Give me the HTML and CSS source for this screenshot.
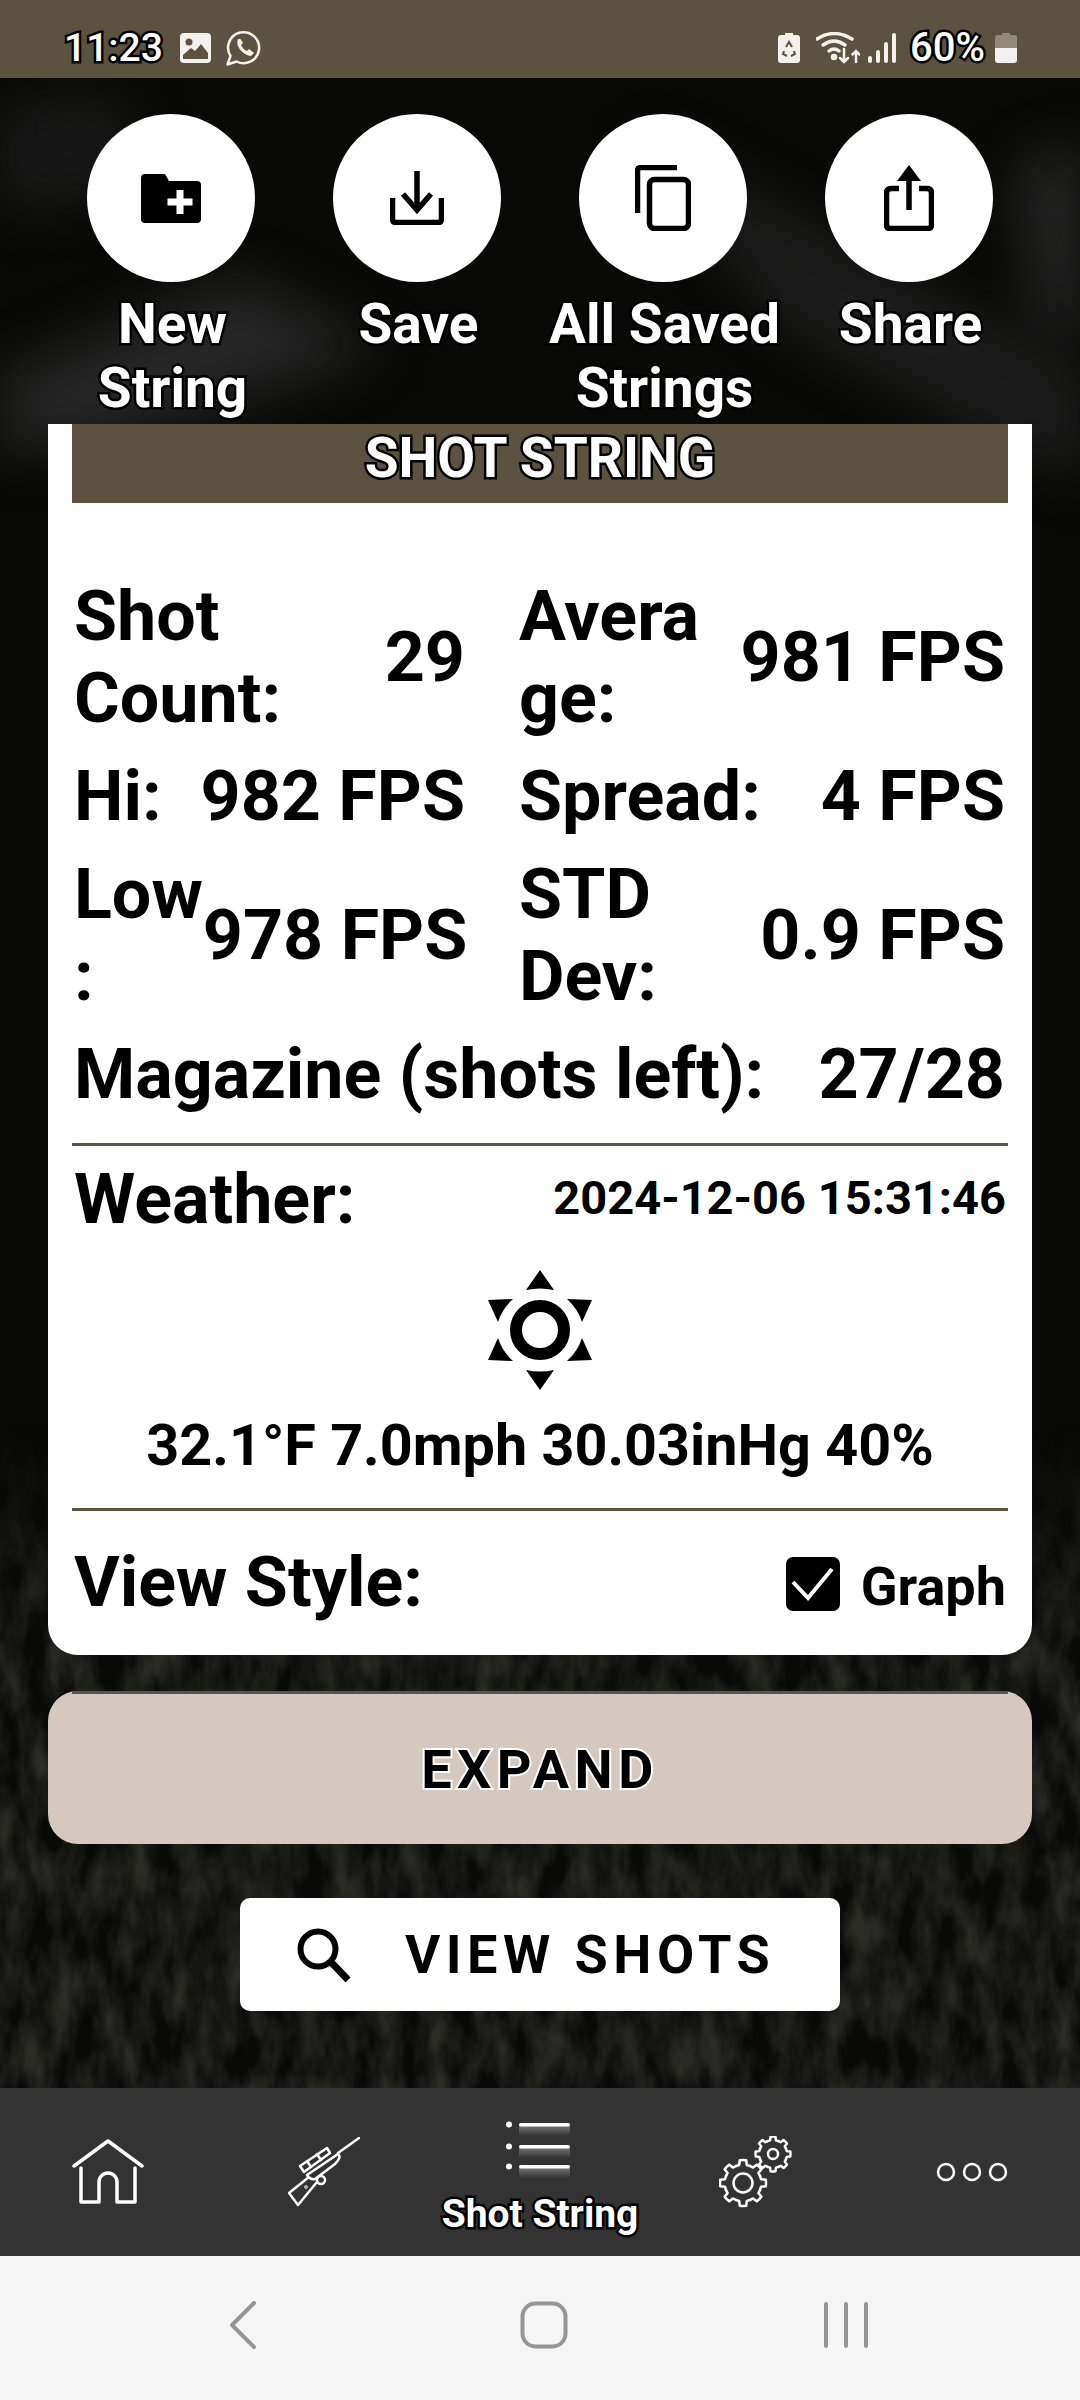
FILE: index.html
```html
<!DOCTYPE html>
<html lang="en">
<head>
    <meta charset="UTF-8">
    <meta name="viewport" content="width=device-width, initial-scale=1.0">
    <title>Shot String</title>
    <link rel="stylesheet" href="styles.css">
</head>
<body>
    <div class="screen">
        <svg class="backdrop" viewBox="0 0 1080 2010" preserveAspectRatio="none" aria-hidden="true">
            <defs>
                <filter id="grass" x="0" y="0" width="100%" height="100%" color-interpolation-filters="sRGB">
                    <feTurbulence type="fractalNoise" baseFrequency="0.04 0.018" numOctaves="4" seed="7"/>
                    <feColorMatrix values="0 0 0 0 0.17  0 0 0 0 0.17  0 0 0 0 0.15  2 0 0 0 -0.6"/>
                </filter>
                <filter id="soft" x="-50%" y="-50%" width="200%" height="200%" color-interpolation-filters="sRGB">
                    <feGaussianBlur stdDeviation="26"/>
                </filter>
                <linearGradient id="fade" x1="0" y1="0" x2="0" y2="1">
                    <stop offset="0" stop-color="#000"/>
                    <stop offset="0.35" stop-color="#fff"/>
                </linearGradient>
                <mask id="lower"><rect x="0" y="1350" width="1080" height="660" fill="url(#fade)"/></mask>
            </defs>
            <rect width="1080" height="2010" fill="#090908"/>
            <g filter="url(#soft)">
                <path d="M0 300 L240 200 L380 270 L120 360 L0 370Z" fill="#262626"/>
                <path d="M640 60 L1080 300 L1080 400 L780 240Z" fill="#1e1e1e"/>
                <path d="M0 30 L120 20 L140 110 L0 130Z" fill="#181818"/>
                <path d="M1020 90 L1080 70 L1080 260 L1040 240Z" fill="#2a2a2a"/>
            </g>
            <rect width="1080" height="2010" filter="url(#grass)" mask="url(#lower)"/>
        </svg>

        <div class="status-bar">
            <div class="status-left">
                <span class="status-text">11:23</span>
                <svg class="status-pic" width="31" height="30" viewBox="0 0 31 30">
                    <rect width="31" height="30" rx="4" fill="#f2f1ee"/>
                    <circle cx="9" cy="9" r="3.500" fill="#5c5240"/>
                    <path d="M3 26 V22 L11 15 L15 18 L21 11 L28 20 V26Z" fill="#5c5240"/>
                </svg>
                <svg class="status-icon" width="36" height="36" viewBox="0 0 36 36" fill="none">
                    <path d="M1.500 34.500 L4.500 26 A15.500 15.500 0 1 1 10.500 31.500Z" stroke="#f2f1ee" stroke-width="2.500" stroke-linejoin="round"/>
                    <path d="M12 9 C9 15 16 25 25 26 L28 23 L23 19 L21 21 C18 20 16 17 15 15 L17 13 L14.500 9Z" fill="#f2f1ee"/>
                </svg>
            </div>
            <div class="status-right">
                <svg class="status-icon" width="22" height="32" viewBox="0 0 22 32">
                    <path d="M7 1 H15 V3 H19 Q22 3 22 6 V28 Q22 31 19 31 H3 Q0 31 0 28 V6 Q0 3 3 3 H7Z" fill="#f2f1ee"/>
                    <path d="M8 15 L11 10 L14 15 M6 19 L5 22 L9 24 M16 19 L17 22 L13 24" stroke="#5c5240" stroke-width="2" fill="none"/>
                </svg>
                <svg class="status-wifi" width="44" height="32" viewBox="0 0 44 32" fill="none" stroke="#f2f1ee" stroke-width="3.500" stroke-linecap="round">
                    <path d="M1 7 Q18 -4 36 7"/>
                    <path d="M7 13 Q18 5 29 13"/>
                    <path d="M13 19 Q18 15 23 19"/>
                    <circle cx="18" cy="25" r="1.500" fill="#f2f1ee"/>
                    <path d="M28 17 V30 M24 26 L28 30 L32 26 M40 30 V19 M36.500 22.500 L40 19 L43.500 22.500" stroke-width="2.500"/>
                </svg>
                <svg class="status-signal" width="28" height="30" viewBox="0 0 28 30" fill="#f2f1ee">
                    <rect x="0" y="23" width="4" height="7" rx="2"/>
                    <rect x="8" y="17" width="4" height="13" rx="2"/>
                    <rect x="16" y="9" width="4" height="21" rx="2"/>
                    <rect x="24" y="0" width="4" height="30" rx="2"/>
                </svg>
                <span class="status-text status-pct">60%</span>
                <svg class="status-icon" width="22" height="32" viewBox="0 0 22 32">
                    <path d="M7 1 H15 V3 H19 Q22 3 22 6 V16 H0 V6 Q0 3 3 3 H7Z" fill="#918a7c"/>
                    <path d="M0 16 H22 V28 Q22 31 19 31 H3 Q0 31 0 28Z" fill="#f2f1ee"/>
                </svg>
            </div>
        </div>

        <div class="actions">
            <div class="action">
                <div class="action-circle">
                    <svg width="60" height="49" viewBox="0 0 60 49">
                        <path d="M4 0 H24 L28 7 H56 Q60 7 60 11 V45 Q60 49 56 49 H4 Q0 49 0 45 V4 Q0 0 4 0Z" fill="#000"/>
                        <path d="M35.500 16 H42.500 V24.500 H51.500 V31.500 H42.500 V40 H35.500 V31.500 H26.500 V24.500 H35.500Z" fill="#fff"/>
                    </svg>
                </div>
                <span class="action-label">New<br>String</span>
            </div>
            <div class="action">
                <div class="action-circle">
                    <svg width="54" height="54" viewBox="0 0 54 54" fill="none" stroke="#000" stroke-width="5.500">
                        <path d="M27 0 V38 M13 23 L27 39 L41 23"/>
                        <path d="M2.500 27 V48 Q2.500 51.500 6 51.500 H48 Q51.500 51.500 51.500 48 V27"/>
                    </svg>
                </div>
                <span class="action-label">Save</span>
            </div>
            <div class="action">
                <div class="action-circle">
                    <svg width="56" height="66" viewBox="0 0 56 66" fill="none" stroke="#000" stroke-width="5.500">
                        <path d="M2.500 48 V6 Q2.500 2.500 6 2.500 H42"/>
                        <rect x="14.500" y="14.500" width="39" height="49" rx="5"/>
                    </svg>
                </div>
                <span class="action-label">All Saved<br>Strings</span>
            </div>
            <div class="action">
                <div class="action-circle">
                    <svg width="50" height="66" viewBox="0 0 50 66" fill="none" stroke="#000" stroke-width="5.500">
                        <path d="M25 8 V45"/>
                        <path d="M25 0 L37 16 L31 16 H19 L13 16Z" fill="#000" stroke="none"/>
                        <path d="M15 23.500 H7 Q2.500 23.500 2.500 28 V60 Q2.500 63.500 6 63.500 H44 Q47.500 63.500 47.500 60 V28 Q47.500 23.500 43 23.500 H35"/>
                    </svg>
                </div>
                <span class="action-label">Share</span>
            </div>
        </div>

        <div class="card">
            <div class="card-title">SHOT STRING</div>

            <div class="stats">
                <div class="stat"><span>Shot<br>Count:</span><span>29</span></div>
                <div class="stat"><span>Avera<br>ge:</span><span>981 FPS</span></div>
                <div class="stat"><span>Hi:</span><span>982 FPS</span></div>
                <div class="stat"><span>Spread:</span><span>4 FPS</span></div>
                <div class="stat"><span>Low<br>:</span><span>978 FPS</span></div>
                <div class="stat"><span>STD<br>Dev:</span><span>0.9 FPS</span></div>
                <div class="stat stat-wide"><span>Magazine (shots left):</span><span>27/28</span></div>
            </div>

            <div class="weather">
                <div class="weather-head">
                    <span>Weather:</span>
                    <span class="weather-date">2024-12-06 15:31:46</span>
                </div>
                <svg class="sun" width="104" height="120" viewBox="0 0 104 120" fill="#000">
                    <path d="M52 0 L66 20 Q52 17 38 20Z"/>
                    <path d="M52 120 L66 100 Q52 103 38 100Z"/>
                    <path d="M0 30 L25 29 Q14 39 10 52Z"/>
                    <path d="M104 30 L79 29 Q90 39 94 52Z"/>
                    <path d="M0 90 L25 91 Q14 81 10 68Z"/>
                    <path d="M104 90 L79 91 Q90 81 94 68Z"/>
                    <circle cx="52" cy="60" r="24" fill="none" stroke="#000" stroke-width="12"/>
                </svg>
                <div class="weather-values">32.1°F 7.0mph 30.03inHg 40%</div>
            </div>

            <div class="view-style">
                <span>View Style:</span>
                <div class="graph-toggle">
                    <div class="checkbox">
                        <svg width="54" height="54" viewBox="0 0 54 54" fill="none">
                            <path d="M7 25 L22 41 L46 12" stroke="#fff" stroke-width="4"/>
                        </svg>
                    </div>
                    <span class="graph-label">Graph</span>
                </div>
            </div>
        </div>

        <div class="btn-expand"><span class="btn-expand-text">EXPAND</span></div>

        <div class="btn-view">
            <svg width="54" height="54" viewBox="0 0 54 54" fill="none" stroke="#000" stroke-width="6">
                <circle cx="21" cy="21" r="17.500"/>
                <path d="M33 33 L51 52" stroke-width="7"/>
            </svg>
            <span>VIEW SHOTS</span>
        </div>

        <div class="spacer"></div>

        <div class="tab-bar">
            <div class="tab">
                <svg width="72" height="66" viewBox="0 0 72 66" fill="none" stroke="#fff" stroke-width="3.500" stroke-linecap="round" stroke-linejoin="round">
                    <path d="M2 27 L36 2 L70 27"/>
                    <path d="M9 29 V63 H27 V43 A9 9 0 0 1 45 43 V63 H63 V29"/>
                </svg>
            </div>
            <div class="tab">
                <svg width="72" height="70" viewBox="0 0 72 70" fill="none" stroke="#fff" stroke-width="2.500" stroke-linejoin="round" stroke-linecap="round">
                    <path d="M71 1 L50 16"/>
                    <path d="M19 38 L50 17 Q54 20 47 27 L27 42 Q22 43 19 38Z"/>
                    <path d="M12 29 L39 11 L42 16 L16 35Z"/>
                    <path d="M19 24 L23 30 M29 17 L33 23"/>
                    <path d="M21 40 L1 56 L10 68 L29 45"/>
                    <circle cx="33" cy="43" r="4"/>
                    <circle cx="18" cy="50" r="0.500"/>
                </svg>
            </div>
            <div class="tab tab-active">
                <svg class="list-icon" width="66" height="60" viewBox="0 0 66 60">
                    <defs>
                        <linearGradient id="glow" x1="0" y1="0" x2="0" y2="1">
                            <stop offset="0" stop-color="#fff" stop-opacity="0.32"/>
                            <stop offset="1" stop-color="#fff" stop-opacity="0"/>
                        </linearGradient>
                    </defs>
                    <g fill="url(#glow)">
                        <rect x="14" y="5" width="51" height="10"/>
                        <rect x="14" y="27" width="51" height="10"/>
                        <rect x="14" y="47" width="51" height="10"/>
                    </g>
                    <g fill="#fff">
                        <circle cx="4" cy="3.500" r="3"/>
                        <circle cx="4" cy="25.500" r="3"/>
                        <circle cx="4" cy="45.500" r="3"/>
                        <rect x="14" y="2" width="51" height="3.500" rx="1.700"/>
                        <rect x="14" y="24" width="51" height="3.500" rx="1.700"/>
                        <rect x="14" y="44" width="51" height="3.500" rx="1.700"/>
                    </g>
                </svg>
                <span class="tab-label">Shot String</span>
            </div>
            <div class="tab">
                <svg width="74" height="72" viewBox="0 0 74 72" fill="none" stroke="#fff" stroke-linejoin="round" stroke-linecap="round">
                    <defs>
                        <path id="gear-tooth" d="M-3.060 -7.390 L-1.660 -7.820 L-1.390 -9.900 Q0 -10.100 1.390 -9.900 L1.660 -7.820 L3.060 -7.390"/>
                        <g id="gear">
                            <use href="#gear-tooth"/>
                            <use href="#gear-tooth" transform="rotate(45)"/>
                            <use href="#gear-tooth" transform="rotate(90)"/>
                            <use href="#gear-tooth" transform="rotate(135)"/>
                            <use href="#gear-tooth" transform="rotate(180)"/>
                            <use href="#gear-tooth" transform="rotate(225)"/>
                            <use href="#gear-tooth" transform="rotate(270)"/>
                            <use href="#gear-tooth" transform="rotate(315)"/>
                        </g>
                    </defs>
                    <use href="#gear" transform="translate(24 47) scale(2.300)" stroke-width="1.100"/>
                    <circle cx="24" cy="47" r="9.500" stroke-width="2.500"/>
                    <use href="#gear" transform="translate(54 18) scale(1.750)" stroke-width="1.400"/>
                    <circle cx="54" cy="18" r="5" stroke-width="2.500"/>
                </svg>
            </div>
            <div class="tab">
                <svg width="72" height="20" viewBox="0 0 72 20" fill="none" stroke="#fff" stroke-width="2.500">
                    <circle cx="10" cy="10" r="8"/>
                    <circle cx="36" cy="10" r="8"/>
                    <circle cx="62" cy="10" r="8"/>
                </svg>
            </div>
        </div>

        <div class="system-nav">
            <svg width="28" height="48" viewBox="0 0 28 48" fill="none" stroke="#959595" stroke-width="4" stroke-linecap="round" stroke-linejoin="round">
                <path d="M25 2 L3 24 L25 46"/>
            </svg>
            <svg width="48" height="48" viewBox="0 0 48 48" fill="none" stroke="#959595" stroke-width="4">
                <rect x="2.500" y="2.500" width="43" height="43" rx="13"/>
            </svg>
            <svg width="46" height="46" viewBox="0 0 46 46" fill="none" stroke="#959595" stroke-width="4" stroke-linecap="round">
                <path d="M3 2 V44 M23 2 V44 M43 2 V44"/>
            </svg>
        </div>
    </div>
</body>
</html>
```

FILE: styles.css
```css
* {
    box-sizing: border-box;
}
html, body {
    margin: 0;
    padding: 0;
}
body {
    font-family: Roboto, "Liberation Sans", sans-serif;
    background: #000;
    color: #000;
}
.screen {
    position: relative;
    width: 1080px;
    height: 2400px;
    display: flex;
    flex-direction: column;
    overflow: hidden;
}
.backdrop {
    position: absolute;
    left: 0;
    top: 78px;
    width: 1080px;
    height: 2010px;
}
.screen > div {
    position: relative;
}

/* text with a dark rim, like the app draws on its labels */
.status-text, .action-label, .card-title, .tab-label {
    color: #fff;
    -webkit-text-stroke: 5px #000;
    paint-order: stroke fill;
}

.status-bar {
    height: 78px;
    flex: none;
    background: #5c5240;
    display: flex;
    justify-content: space-between;
    align-items: center;
    padding: 18px 63px 0 64px;
}
.status-left, .status-right {
    display: flex;
    align-items: center;
}
.status-text {
    font-size: 39px;
    line-height: 44px;
    font-weight: 500;
}
.status-icon {
    display: block;
}
.status-pic {
    display: block;
    margin: 0 15px 0 17px;
}
.status-wifi {
    display: block;
    margin: 0 8px 0 16px;
}
.status-signal {
    display: block;
    margin-right: 14px;
}
.status-pct {
    font-size: 40px;
    margin-right: 10px;
}

.actions {
    height: 346px;
    flex: none;
    display: grid;
    grid-template-columns: repeat(4, 246px);
    justify-content: center;
    padding-top: 36px;
}
.action {
    display: flex;
    flex-direction: column;
    align-items: center;
}
.action-circle {
    width: 168px;
    height: 168px;
    flex: none;
    border-radius: 50%;
    background: #fff;
    display: flex;
    align-items: center;
    justify-content: center;
}
.action-label {
    margin-top: 10px;
    padding-left: 3px;
    font-size: 55px;
    line-height: 64px;
    font-weight: 700;
    text-align: center;
}

.card {
    margin: 0 48px;
    height: 1231px;
    flex: none;
    background: #fff;
    border-radius: 0 0 30px 30px;
    padding: 0 24px;
}
.card-title {
    height: 79px;
    background: #5c5240;
    font-size: 55px;
    line-height: 69px;
    font-weight: 700;
    text-align: center;
}
.stats {
    margin-top: 72px;
    display: grid;
    grid-template-columns: 391px 486px;
    column-gap: 54px;
    row-gap: 16px;
    font-size: 70px;
    line-height: 82px;
    font-weight: 700;
    padding-left: 2px;
}
.stat {
    display: flex;
    justify-content: space-between;
    align-items: center;
    white-space: nowrap;
}
.stat-wide {
    grid-column: 1 / -1;
}
.weather {
    margin-top: 28px;
    border-top: 3px solid #5c5240;
    border-bottom: 3px solid #5c5240;
    height: 368px;
    display: flex;
    flex-direction: column;
    align-items: center;
}
.weather-head {
    width: 100%;
    display: flex;
    justify-content: space-between;
    align-items: center;
    padding: 9px 2px 0;
    height: 96px;
    font-size: 70px;
    font-weight: 700;
}
.weather-date {
    font-size: 47px;
    margin-top: -2px;
}
.sun {
    display: block;
    margin-top: 28px;
    flex: none;
}
.weather-values {
    margin-top: 23px;
    font-size: 57.500px;
    line-height: 66px;
    font-weight: 700;
}
.view-style {
    display: flex;
    justify-content: space-between;
    align-items: center;
    height: 114px;
    padding: 0 2px;
    margin-top: 14px;
    font-size: 70px;
    font-weight: 700;
}
.graph-toggle {
    display: flex;
    align-items: center;
    gap: 21px;
    margin-top: 4px;
    font-size: 54px;
}
.graph-label {
    padding-top: 4px;
}
.checkbox {
    width: 54px;
    height: 54px;
    background: #000;
    border-radius: 7px;
}
.checkbox svg {
    display: block;
}

.btn-expand {
    margin: 36px 48px 0;
    height: 153px;
    flex: none;
    background: #d5c9bf;
    border-radius: 30px;
    display: flex;
    align-items: center;
    justify-content: center;
    padding-top: 4px;
}
.btn-expand::before {
    content: "";
    position: absolute;
    left: 24px;
    right: 24px;
    top: 0;
    height: 3px;
    background: #555;
}
.btn-expand-text {
    font-size: 54px;
    font-weight: 700;
    letter-spacing: 5.500px;
    -webkit-text-stroke: 4px #fff;
    paint-order: stroke fill;
}
.btn-view {
    margin: 54px auto 0;
    width: 600px;
    height: 113px;
    flex: none;
    background: #fff;
    border-radius: 10px;
    display: flex;
    align-items: center;
    padding-left: 57px;
    gap: 54px;
    font-size: 54px;
    font-weight: 700;
    letter-spacing: 5.500px;
}
.spacer {
    flex: 1;
}

.tab-bar {
    height: 168px;
    flex: none;
    background: #333;
    display: grid;
    grid-template-columns: repeat(5, 216px);
    align-items: center;
    justify-items: center;
}
.tab {
    display: flex;
    flex-direction: column;
    align-items: center;
}
.tab svg {
    display: block;
}
.tab-active {
    align-self: start;
    padding-top: 33px;
}
.list-icon {
    margin-left: -4px;
}
.tab-label {
    margin-top: 12px;
    font-size: 39px;
    line-height: 42px;
    font-weight: 700;
    -webkit-text-stroke-width: 5px;
}

.system-nav {
    height: 144px;
    flex: none;
    background: #f6f6f6;
    display: flex;
    justify-content: center;
    align-items: center;
    padding: 0 0 6px 18px;
}
.system-nav svg:nth-child(1) {
    margin-right: 263px;
}
.system-nav svg:nth-child(2) {
    margin-right: 255px;
}
```
